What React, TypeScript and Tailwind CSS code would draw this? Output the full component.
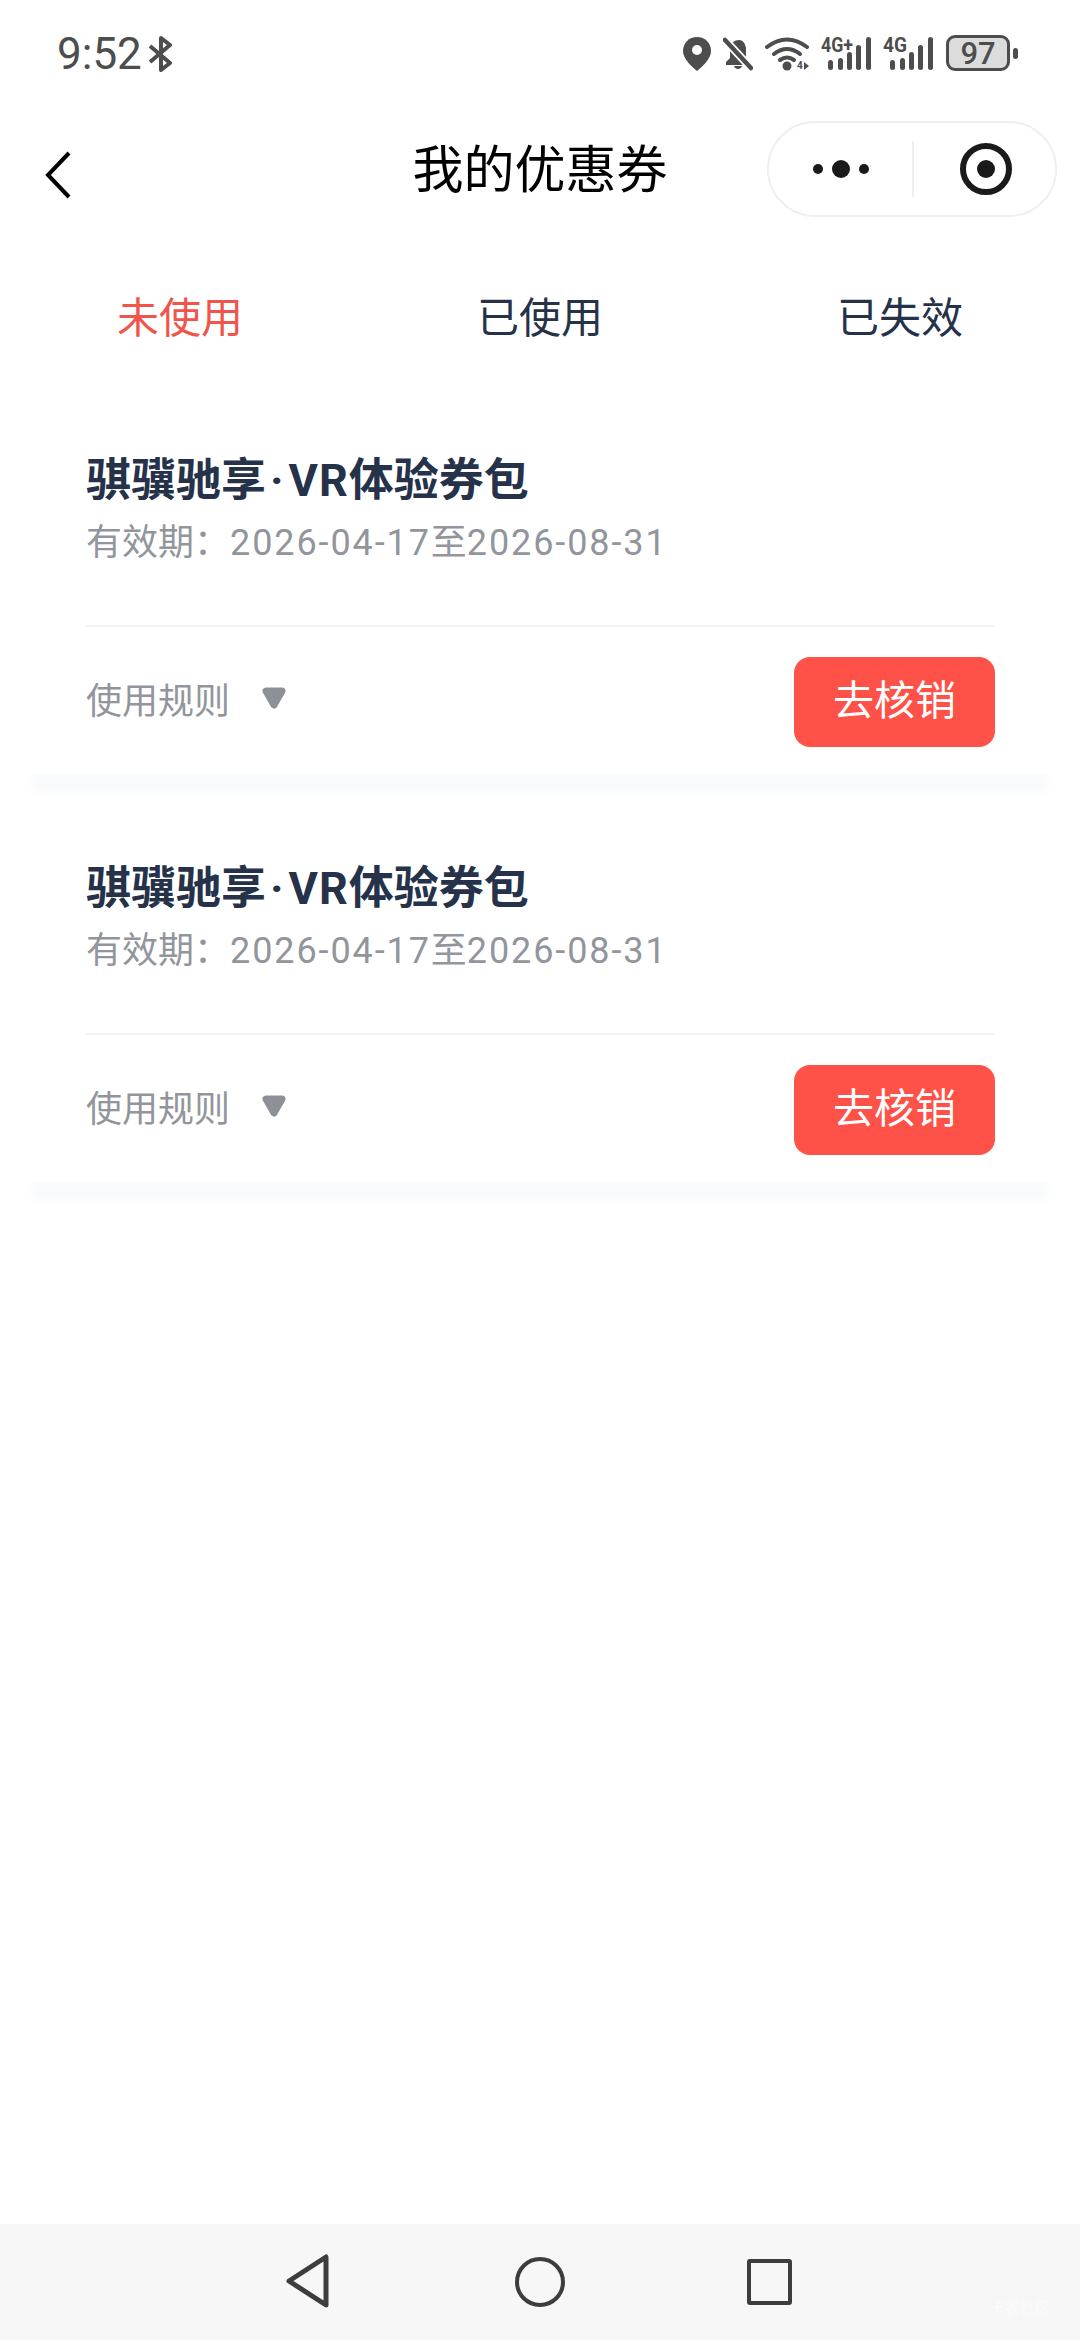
const cjk = '"Noto Sans CJK SC", "Noto Sans", sans-serif';
const latin = 'Roboto, sans-serif';

function Signal({ label, className }: { label: string; className: string }) {
  return (
    <svg width="50" height="40" viewBox="0 -6 50 40" className={`-mt-[4px] ${className}`}>
      <text x="0" y="15" fontSize="21" fontWeight="700" fill="currentColor" fontFamily="Roboto" textLength={label.length > 2 ? 32 : 24} lengthAdjust="spacingAndGlyphs">{label}</text>
      <rect x="7" y="23" width="5" height="10" rx="2.500" fill="currentColor" />
      <rect x="17" y="21" width="5" height="12" rx="2.500" fill="currentColor" />
      <rect x="26" y="15" width="5" height="18" rx="2.500" fill="currentColor" />
      <rect x="35" y="8" width="5" height="25" rx="2.500" fill="currentColor" />
      <rect x="45" y="0" width="5" height="33" rx="2.500" fill="currentColor" />
    </svg>
  );
}

function StatusIcons() {
  return (
    <div className="flex items-start text-[#4d4d4d]">
      {/* location */}
      <svg width="28" height="34" viewBox="0 0 28 34" className="mt-[2px] mr-[12px]">
        <path d="M14 0C6 0 0 6 0 14c0 8 9 16 14 20 5-4 14-12 14-20C28 6 22 0 14 0z" fill="currentColor" />
        <circle cx="14" cy="13" r="5" fill="#fff" />
      </svg>
      {/* muted bell */}
      <svg width="30" height="34" viewBox="0 0 30 34" className="mt-[2px] mr-[12px]">
        <path d="M16 3c-5 0-8 3-9 8v10l-4 4v3h22v-3l-2-2V11c-1-5-3-8-7-8z" fill="currentColor" />
        <path d="M11 29h8c-1 4-7 4-8 0z" fill="currentColor" />
        <path d="M2 3l26 28" stroke="#fff" strokeWidth="8" />
        <path d="M2 3l26 28" stroke="currentColor" strokeWidth="4.500" strokeLinecap="round" />
      </svg>
      {/* wifi */}
      <svg width="44" height="36" viewBox="0 0 44 36" className="mt-[2px] mr-[12px]">
        <g fill="none" stroke="currentColor" strokeWidth="4" strokeLinecap="round">
          <path d="M2 10Q22 -5 42 10" />
          <path d="M9 17Q22 7 35 17" />
          <path d="M15 23Q22 18 29 23" />
        </g>
        <circle cx="22" cy="29" r="4.500" fill="currentColor" />
        <text x="32" y="32" fontSize="10" fontWeight="700" fill="currentColor" fontFamily="Roboto">4</text>
        <path d="M39 25v8l5-4z" fill="currentColor" />
      </svg>
      <Signal label="4G+" className="mr-[12px]" />
      <Signal label="4G" className="mr-[13px]" />
      {/* battery */}
      <div className="flex items-center">
        <div className="w-[64px] h-[36px] rounded-[9px] border-[3px] border-[#4d4d4d] bg-[#dcdcdc] flex items-center justify-center text-[31px] leading-none font-medium" style={{ fontFamily: latin }}>
          97
        </div>
        <div className="ml-[3px] w-[5px] h-[11px] rounded-full bg-[#4d4d4d]" />
      </div>
    </div>
  );
}

function CouponCard() {
  return (
    <div className="bg-white mx-[30px] pl-[56px] pr-[55px] pt-[51px] h-[380px] shadow-[0_20px_10px_-2px_#fafbfd]">
      <div className="text-[45px] leading-[62px] font-bold text-[#25324a]">
        骐骥驰享
        <span className="tracking-[1px]" style={{ fontFamily: latin }}><span className="px-[4px]">·</span>VR</span>
        体验券包
      </div>
      <div className="mt-[2px] text-[36px] leading-[50px] text-[#92959c]">
        有效期：
        <span className="tracking-[1.9px]" style={{ fontFamily: latin }}>2026-04-17</span>
        至
        <span className="tracking-[1.9px]" style={{ fontFamily: latin }}>2026-08-31</span>
      </div>
      <div className="mt-[57px] border-t-2 border-[#f3f3f3] pt-[30px] flex items-center justify-between">
        <div className="mb-[9px] flex items-center text-[36px] leading-[50px] text-[#92959c]">
          使用规则
          <svg width="26" height="24" viewBox="0 0 26 24" className="ml-[31px]">
            <path d="M5 5h16L13 19z" fill="#8d9096" stroke="#8d9096" strokeWidth="7" strokeLinejoin="round" />
          </svg>
        </div>
        <button className="w-[201px] h-[90px] pb-[8px] rounded-[16px] bg-[#fe5148] text-white text-[41px]">去核销</button>
      </div>
    </div>
  );
}

export default function App() {
  return (
    <div className="relative w-[1080px] h-[2340px] bg-white flex flex-col overflow-hidden" style={{ fontFamily: cjk }}>
      <div className="h-[108px] pl-[57px] pr-[62px] flex items-center justify-between">
        <div className="flex items-center text-[#4d4d4d]">
          <span className="text-[44px] leading-none" style={{ fontFamily: latin }}>9:52</span>
          <svg width="24" height="36" viewBox="0 0 24 36" fill="none" stroke="currentColor" strokeWidth="4" className="ml-[6px]">
            <path d="M2 10l20 17-9 7V2l9 7L2 26" strokeLinejoin="round" />
          </svg>
        </div>
        <StatusIcons />
      </div>

      <div className="relative h-[122px] flex items-center justify-center">
        <svg width="28" height="50" viewBox="0 0 28 50" fill="none" stroke="#000" strokeWidth="4" className="absolute left-[44px] top-[42px]">
          <path d="M25 3L4 25l21 22" />
        </svg>
        <span className="text-[51px] leading-[72px] mb-[6px] text-black">我的优惠券</span>
        <div className="absolute left-[767px] top-[13px] w-[290px] h-[96px] rounded-full border-2 border-[#efefef] flex items-center">
          <div className="w-[143px] flex items-center justify-center gap-[9px]">
            <span className="w-[10px] h-[10px] rounded-full bg-[#1a1a1a]" />
            <span className="w-[18px] h-[18px] rounded-full bg-[#1a1a1a]" />
            <span className="w-[10px] h-[10px] rounded-full bg-[#1a1a1a]" />
          </div>
          <div className="w-[2px] h-[56px] bg-[#efefef]" />
          <div className="flex-1 pl-[2px] flex items-center justify-center">
            <div className="w-[52px] h-[52px] rounded-full border-[6px] border-[#1a1a1a] flex items-center justify-center">
              <span className="w-[18px] h-[18px] rounded-full bg-[#1a1a1a]" />
            </div>
          </div>
        </div>
      </div>

      <div className="h-[165px] pt-[55px] grid grid-cols-3 text-[42px] leading-[60px] text-center text-[#25324a]">
        <span className="text-[#f0554c]">未使用</span>
        <span>已使用</span>
        <span>已失效</span>
      </div>

      <div className="flex flex-col gap-[28px]">
        <CouponCard />
        <CouponCard />
      </div>

      <div className="absolute left-0 right-0 bottom-0 h-[116px] bg-[#f7f7f7] text-[#3d3d3d]">
        <svg width="50" height="54" viewBox="0 0 50 54" fill="none" stroke="currentColor" strokeWidth="5" strokeLinejoin="round" className="absolute left-[284px] top-[30px]">
          <path d="M42 3v48L5 27z" />
        </svg>
        <div className="absolute left-[515px] top-[33px] w-[50px] h-[50px] rounded-full border-[4px] border-[#3d3d3d]" />
        <div className="absolute left-[747px] top-[35px] w-[45px] h-[46px] rounded-[3px] border-[4px] border-[#3d3d3d]" />
        <span className="absolute left-[990px] top-[72px] text-[15px] leading-[22px] text-white/60">卡农社区</span>
      </div>
    </div>
  );
}
